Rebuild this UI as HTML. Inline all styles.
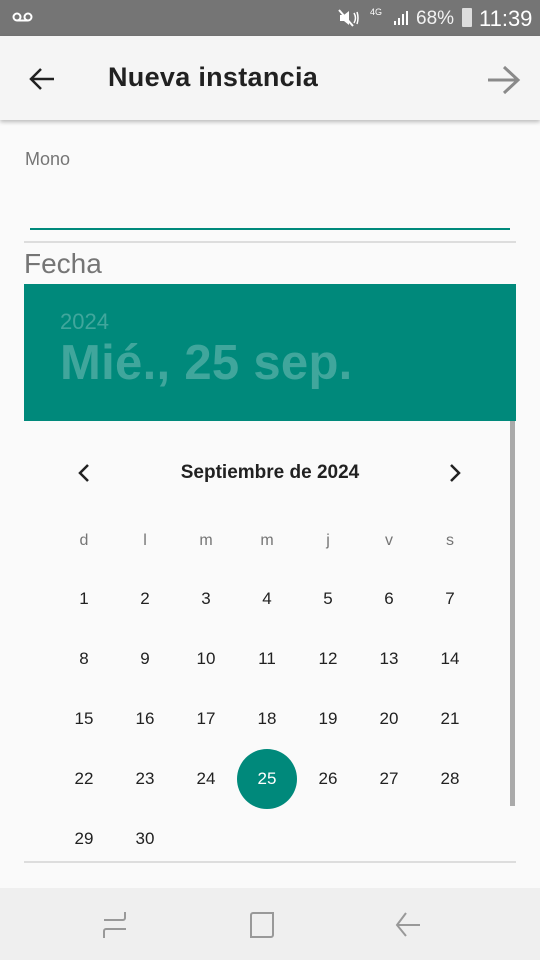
<!DOCTYPE html>
<html><head><meta charset="utf-8"><style>
*{margin:0;padding:0;box-sizing:border-box}
html,body{width:540px;height:960px;overflow:hidden}
body{background:#fafafa;font-family:"Liberation Sans",Roboto,sans-serif;position:relative}
.a{position:absolute}
.sb{left:0;top:0;width:540px;height:36px;background:#757575;color:#f2f2f2}
.ab{left:0;top:36px;width:540px;height:84px;background:#f5f5f5;box-shadow:0 2px 4px rgba(0,0,0,.25)}
.d{width:40px;text-align:center;font-size:17px;color:#212121;margin-left:-20px}
.w{width:40px;text-align:center;font-size:16px;color:#757575;margin-left:-20px}
</style></head><body>
<div class="a sb">
 <svg class="a" style="left:12px;top:12px" width="22" height="10"><circle cx="5" cy="5" r="3.5" fill="none" stroke="#fff" stroke-width="2"/><circle cx="16" cy="5" r="3.5" fill="none" stroke="#fff" stroke-width="2"/><line x1="5" y1="8.5" x2="16" y2="8.5" stroke="#fff" stroke-width="2"/></svg>
 <svg class="a" style="left:338px;top:9px" width="22" height="18"><path d="M2 6h4l5-4v14l-5-4H2z" fill="#fff"/><path d="M1 1l14 16" stroke="#fff" stroke-width="2"/><path d="M16 4q3 5 0 10M19 3q2 6 0 12" stroke="#fff" stroke-width="1.5" fill="none"/></svg>
 <div class="a" style="left:370px;top:7px;font-size:9px;color:#fff">4G</div>
 <svg class="a" style="left:392px;top:10px" width="20" height="16"><rect x="2" y="11" width="2" height="4" fill="#fff"/><rect x="6" y="8" width="2" height="7" fill="#fff"/><rect x="10" y="4" width="2" height="11" fill="#fff"/><rect x="14" y="1" width="2" height="14" fill="#fff"/></svg>
 <div class="a" style="left:416px;top:8px;font-size:19px;color:#f2f2f2">68%</div>
 <div class="a" style="left:462px;top:8px;width:10px;height:19px;background:#ddd;border-radius:1px"></div>
 <div class="a" style="left:479px;top:6px;font-size:22px;color:#fff">11:39</div>
</div>
<div class="a ab">
 <svg class="a" style="left:28px;top:30px" width="28" height="26"><path d="M26 13H4M13 3L3 13l10 10" stroke="#212121" stroke-width="2.5" fill="none"/></svg>
 <div class="a" style="left:108px;top:26px;font-size:27px;font-weight:bold;color:#212121;letter-spacing:0.3px">Nueva instancia</div>
 <svg class="a" style="left:486px;top:28px" width="36" height="32"><path d="M2 16h30M18 3l14 13-14 13" stroke="#8a8a8a" stroke-width="3" fill="none"/></svg>
</div>
<div class="a" style="left:25px;top:149px;font-size:18px;color:#757575">Mono</div>
<div class="a" style="left:30px;top:228px;width:480px;height:2px;background:#00897b"></div>
<div class="a" style="left:24px;top:241px;width:492px;height:2px;background:#ddd"></div>
<div class="a" style="left:24px;top:248px;font-size:28px;color:#757575">Fecha</div>
<div class="a" style="left:24px;top:284px;width:492px;height:137px;background:#00897b">
 <div class="a" style="left:36px;top:25px;font-size:22px;color:rgba(255,255,255,.25)">2024</div>
 <div class="a" style="left:36px;top:51px;font-size:49px;font-weight:bold;color:rgba(255,255,255,.25);letter-spacing:0.3px">Mié., 25 sep.</div>
</div>
<div class="a" style="left:510px;top:421px;width:5px;height:385px;background:#aaa"></div>
<svg class="a" style="left:76px;top:462px" width="16" height="22"><path d="M12 3L4 11l8 8" stroke="#212121" stroke-width="2.5" fill="none"/></svg>
<svg class="a" style="left:447px;top:462px" width="16" height="22"><path d="M4 3l8 8-8 8" stroke="#212121" stroke-width="2.5" fill="none"/></svg>
<div class="a" style="left:120px;top:462px;width:300px;text-align:center;font-size:19px;font-weight:bold;color:#212121">Septiembre de 2024</div>
<div class="a" style="left:237px;top:749px;width:60px;height:60px;border-radius:50%;background:#00897b"></div>
<div id="cal"></div>
<div class="a" style="left:24px;top:861px;width:492px;height:2px;background:#ddd"></div>
<div class="a" style="left:0;top:888px;width:540px;height:72px;background:#efefef">
 <svg class="a" style="left:103px;top:24px" width="26" height="28"><path d="M22 0v6a2 2 0 0 1-2 2H1M1 26v-7a2 2 0 0 1 2-2h20" stroke="#999" stroke-width="2" fill="none"/></svg>
 <svg class="a" style="left:249px;top:24px" width="26" height="28"><path d="M25 1H4a2 2 0 0 0-2 2v22h20a2 2 0 0 0 2-2V1" stroke="#999" stroke-width="2" fill="none"/></svg>
 <svg class="a" style="left:395px;top:24px" width="26" height="28"><path d="M25 13H2M11 1L2 13l9 11" stroke="#999" stroke-width="2" fill="none"/></svg>
</div>
<script>
var xs=[84,145,206,267,328,389,450],h='',wd=['d','l','m','m','j','v','s'];
wd.forEach(function(t,i){h+='<div class="a w" style="left:'+xs[i]+'px;top:532px">'+t+'</div>'});
for(var n=1;n<=30;n++){var c=(n-1)%7,r=Math.floor((n-1)/7);
h+='<div class="a d" style="left:'+xs[c]+'px;top:'+(589+r*60)+'px;'+(n==25?'color:#fff;':'')+'">'+n+'</div>'}
document.getElementById('cal').innerHTML=h;
</script>
</body></html>
